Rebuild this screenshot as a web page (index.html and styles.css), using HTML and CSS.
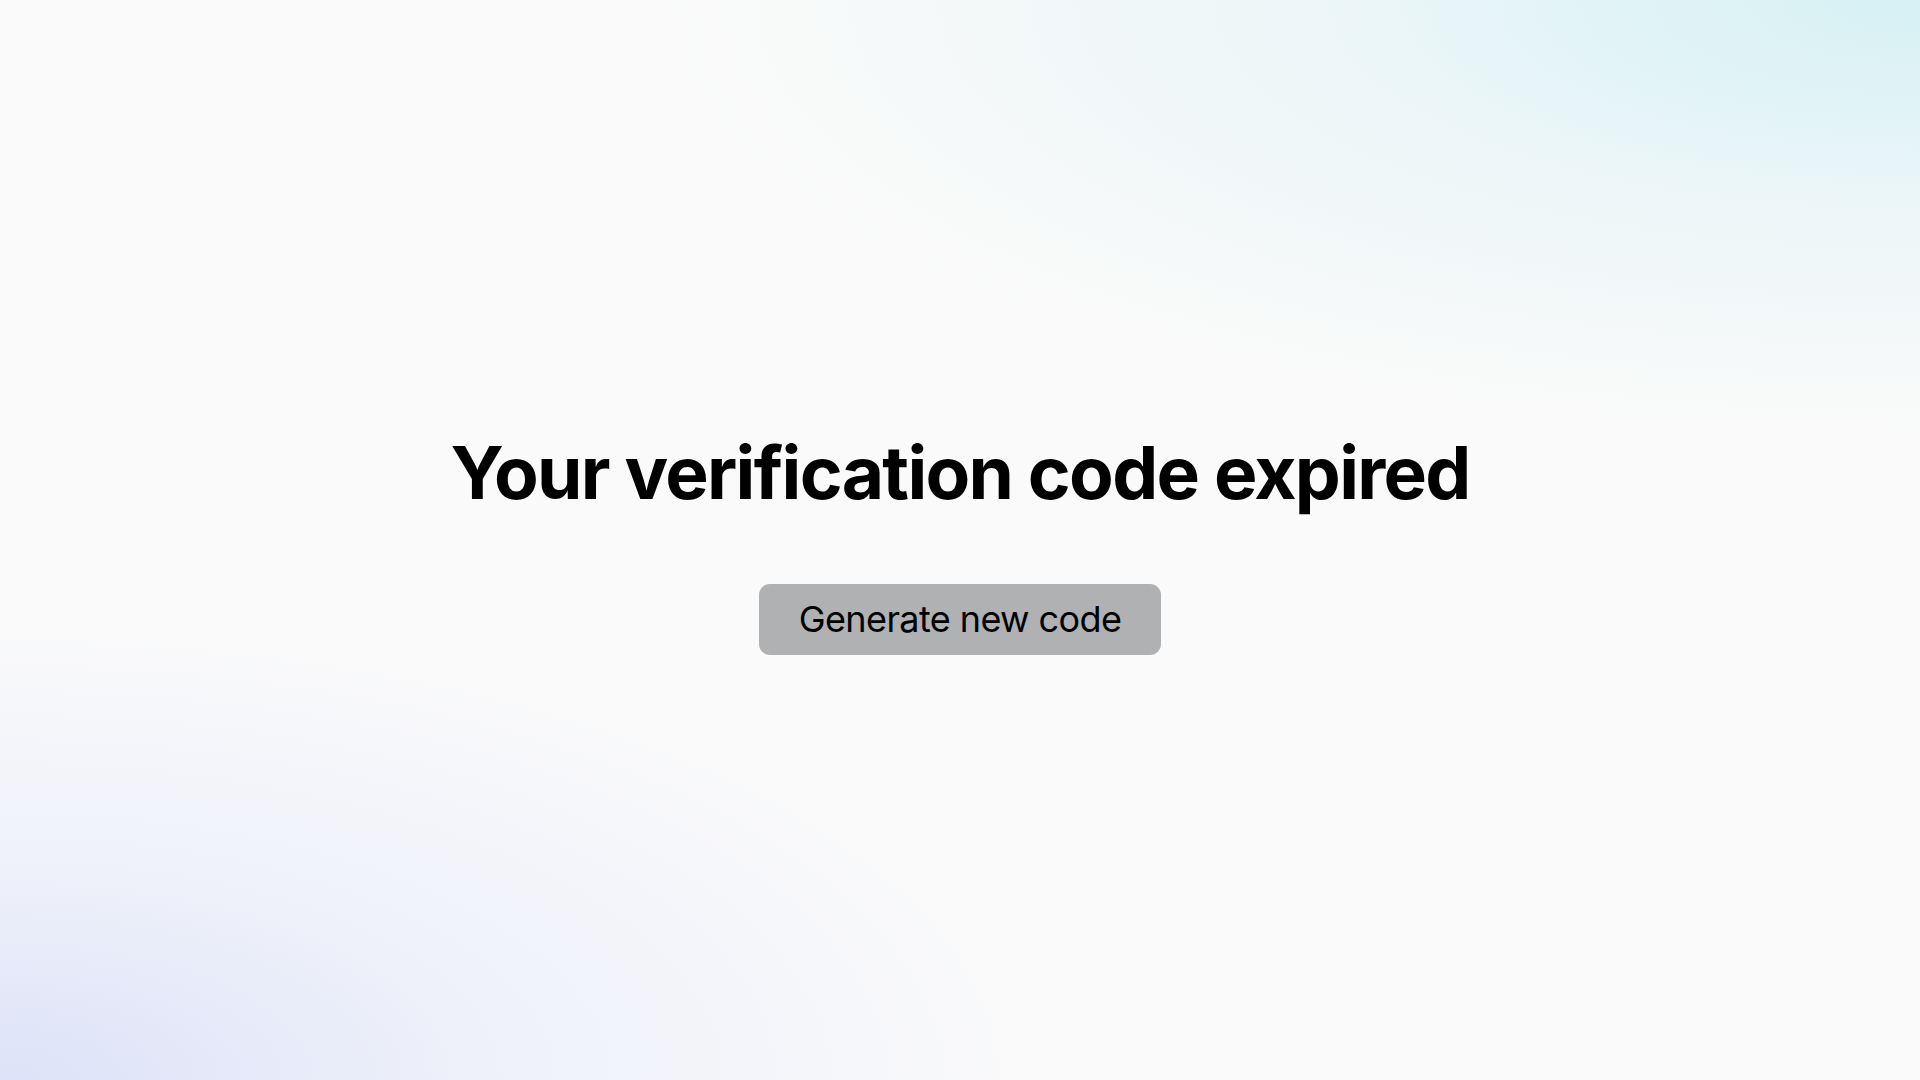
FILE: index.html
```html
<!DOCTYPE html>
<html lang="en">
<head>
<meta charset="utf-8">
<title>Verification code expired</title>
<link rel="stylesheet" href="styles.css">
</head>
<body>
<main class="page">
  <h1 class="title">Your verification code expired</h1>
  <button class="btn" type="button">Generate new code</button>
</main>
</body>
</html>
```
FILE: styles.css
```css
html, body {
  margin: 0;
  padding: 0;
  height: 100%;
}
body {
  font-family: Inter, "Noto Sans", sans-serif;
  background-color: #fafafa;
  background-image:
    radial-gradient(ellipse 1250px 440px at 100% 0%, rgba(205, 238, 242, 0.8) 0%, rgba(218, 241, 246, 0.4) 50%, rgba(250, 250, 250, 0) 100%),
    radial-gradient(ellipse 1050px 460px at 0% 100%, rgba(220, 226, 248, 1) 0%, rgba(232, 236, 250, 0.65) 45%, rgba(250, 250, 250, 0) 100%);
  background-repeat: no-repeat;
  color: #000;
}
.page {
  height: 100vh;
  display: flex;
  flex-direction: column;
  align-items: center;
  justify-content: center;
  padding-top: 4px;
  box-sizing: border-box;
}
.title {
  margin: 0 0 67px 0;
  font-size: 73px;
  font-weight: 700;
  letter-spacing: -1.7px;
  line-height: 1.2;
}
.btn {
  font-family: inherit;
  font-size: 36px;
  font-weight: 400;
  letter-spacing: -0.6px;
  color: #000;
  background: #b0b1b3;
  border: none;
  border-radius: 11px;
  padding: 0 40px;
  height: 71px;
  cursor: pointer;
}
```
